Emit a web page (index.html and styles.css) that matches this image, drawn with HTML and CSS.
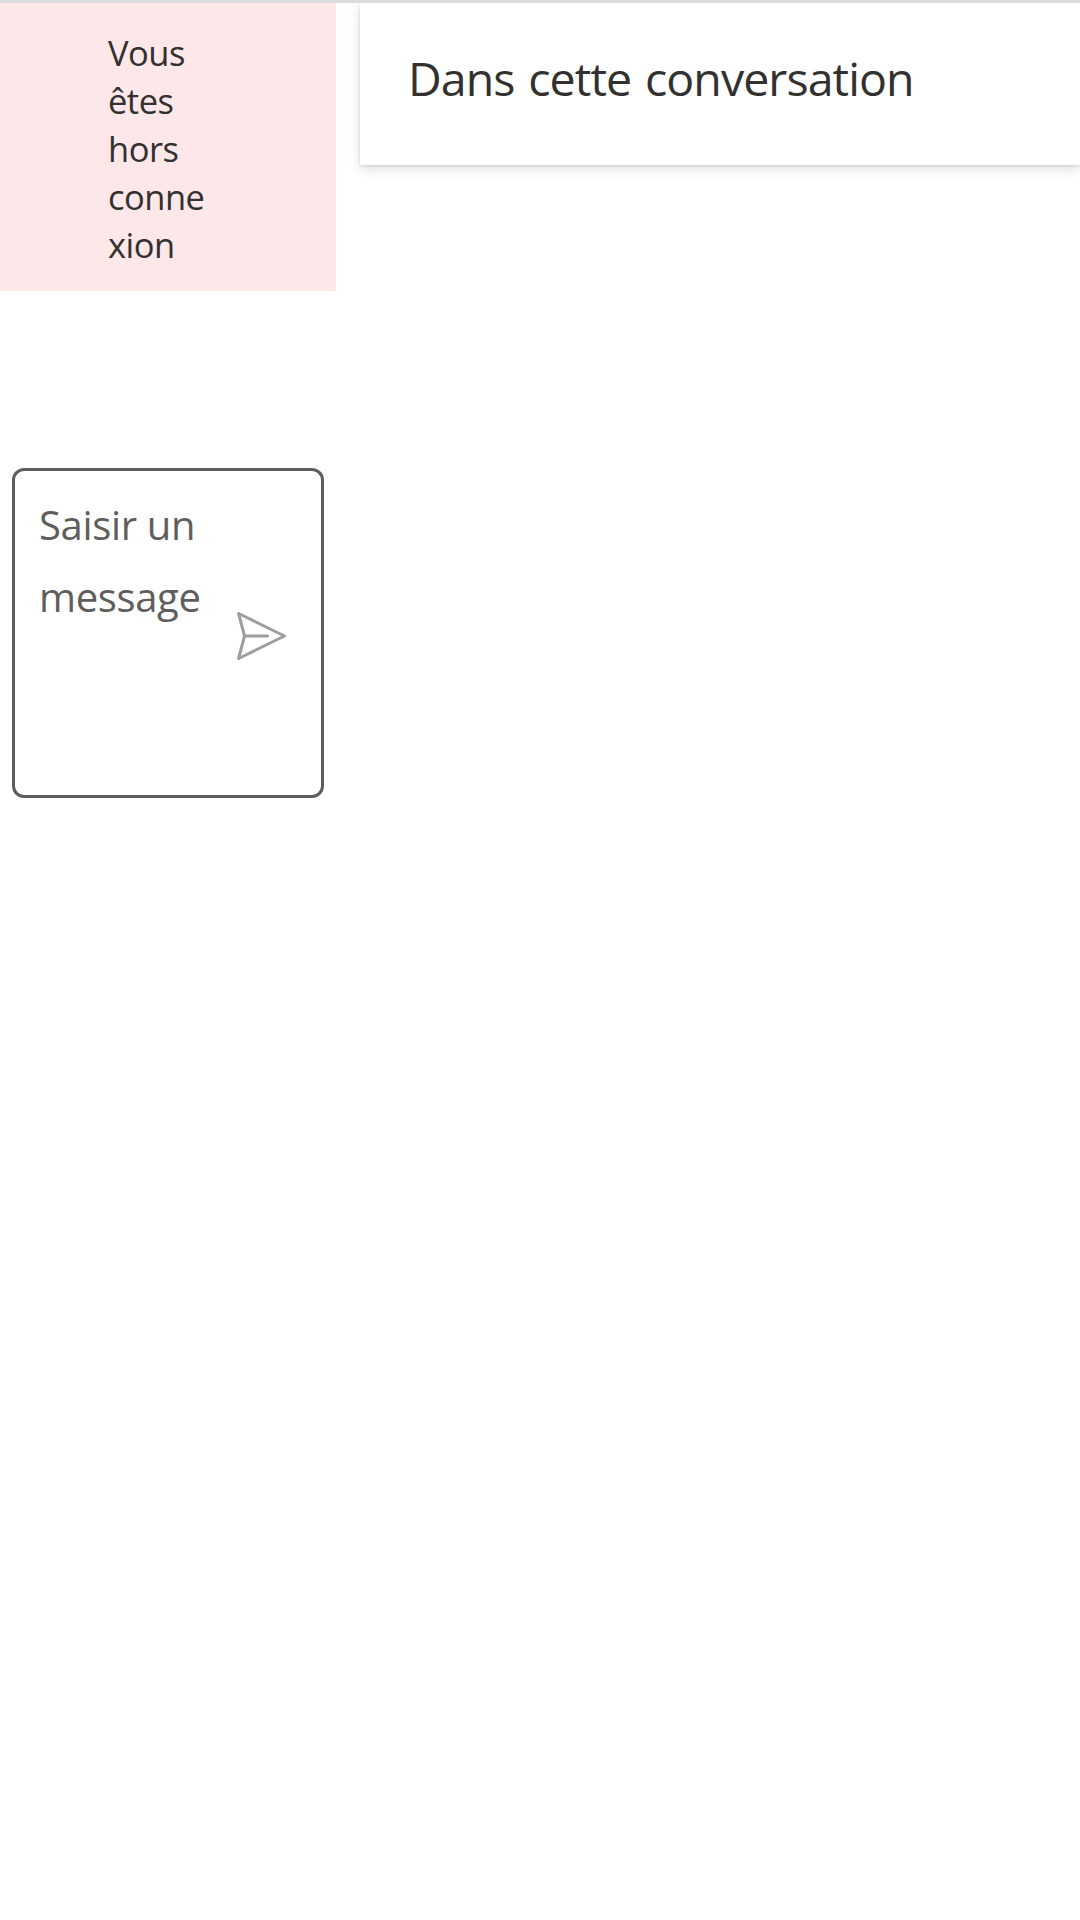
FILE: index.html
```html
<!DOCTYPE html>
<html lang="fr">
<head>
<meta charset="utf-8">
<title>Conversation</title>
<link rel="stylesheet" href="styles.css">
</head>
<body>
<div class="app">
  <main class="chat">
    <div class="banner" role="status"><p class="banner-text">Vous êtes hors connexion</p></div>
    <div class="composer">
      <div class="placeholder">Saisir un message</div>
      <button class="send" aria-label="Envoyer">
        <svg width="60" height="60" viewBox="0 0 60 60" fill="none" stroke="currentColor" stroke-width="3" stroke-linecap="round" stroke-linejoin="round"><path d="M8.6 7.5L54.5 30L8.6 52.5L14.5 30ZM14.5 30H37.5"/></svg>
      </button>
    </div>
  </main>
  <aside class="panel">
    <header class="panel-header"><h1 class="title">Dans cette conversation</h1></header>
  </aside>
</div>
</body>
</html>
```
FILE: styles.css
```css
* { box-sizing: border-box; }
body {
  margin: 0;
  background: #fff;
  color: #323130;
  font-family: "Segoe UI", "Open Sans", "Noto Sans", sans-serif;
}
.app {
  display: grid;
  grid-template-columns: 336px 1fr;
  gap: 24px;
  height: 1920px;
  border-top: 3px solid #dcdcdc;
  overflow: hidden;
}
.banner {
  height: 288px;
  padding: 26px 0 22px 108px;
  background: #fde7e9;
}
.banner-text {
  width: 106px;
  margin: 0;
  font-size: 34.5px;
  line-height: 48px;
  letter-spacing: -0.5px;
  overflow-wrap: anywhere;
}
.composer {
  display: flex;
  align-items: center;
  justify-content: space-between;
  height: 330px;
  margin: 177px 12px 0;
  padding: 18px 31px 12px 24px;
  border: 3px solid #605e5c;
  border-radius: 12px;
}
.placeholder {
  align-self: flex-start;
  width: 166px;
  color: #605e5c;
  font-size: 40px;
  line-height: 72px;
  letter-spacing: -0.35px;
}
.send {
  flex: none;
  width: 60px;
  height: 60px;
  padding: 0;
  border: 0;
  background: none;
  color: #a09e9d;
}
.send svg { display: block; }
.panel-header {
  height: 162px;
  padding: 42px 48px;
  background: #fff;
  box-shadow: 0 4px 11px rgba(0, 0, 0, .13), 0 1px 3px rgba(0, 0, 0, .11);
}
.title {
  margin: 0;
  font-size: 46.5px;
  font-weight: 400;
  line-height: 66px;
  letter-spacing: -0.95px;
  word-spacing: 2.7px;
  white-space: nowrap;
}
```
